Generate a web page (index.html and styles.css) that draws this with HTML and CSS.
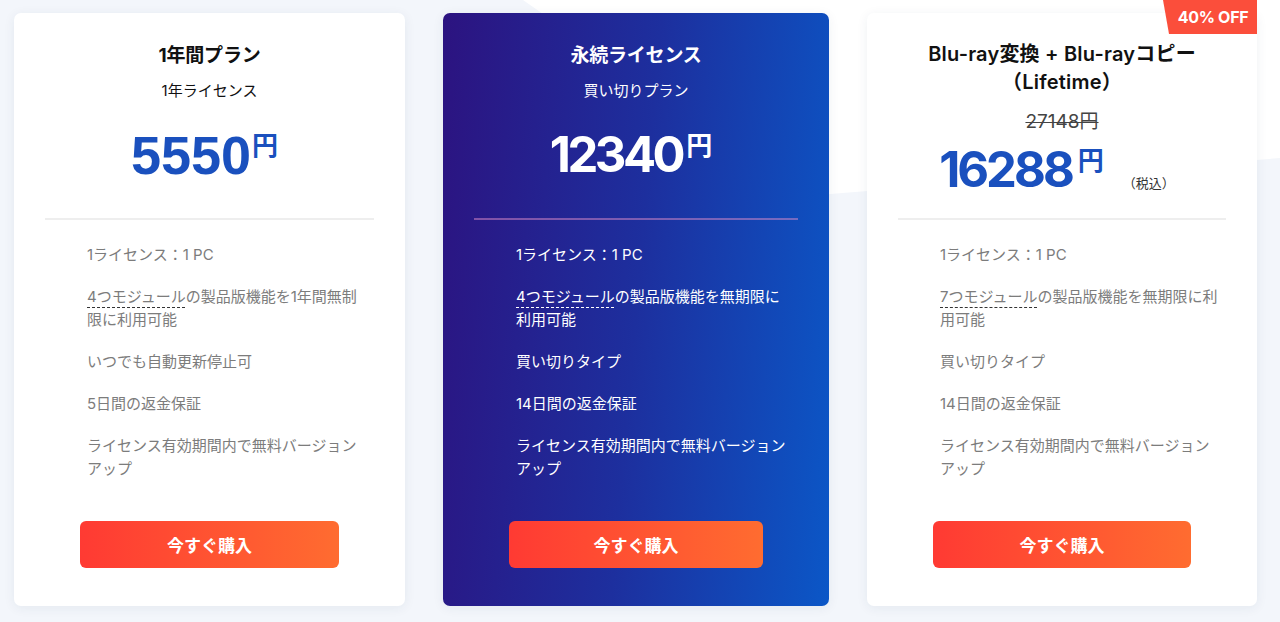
FILE: index.html
```html
<!DOCTYPE html>
<html lang="ja">
<head>
<meta charset="utf-8">
<title>プラン</title>
<link rel="stylesheet" href="styles.css">
</head>
<body>
<div class="bg-shape"></div>
<main class="plans">
  <section class="card">
    <div class="head">
      <h3 class="title">1年間プラン</h3>
      <p class="sub">1年ライセンス</p>
      <div class="price price--arial"><span class="num">5550</span><span class="yen">円</span></div>
    </div>
    <hr class="divider">
    <ul class="features">
      <li>1ライセンス：1 PC</li>
      <li><span class="dotted">4つモジュール</span>の製品版機能を1年間無制限に利用可能</li>
      <li>いつでも自動更新停止可</li>
      <li>5日間の返金保証</li>
      <li>ライセンス有効期間内で無料バージョンアップ</li>
    </ul>
    <a class="buy" href="#">今すぐ購入</a>
  </section>

  <section class="card card--dark">
    <div class="head">
      <h3 class="title">永続ライセンス</h3>
      <p class="sub">買い切りプラン</p>
      <div class="price"><span class="num">12340</span><span class="yen">円</span></div>
    </div>
    <hr class="divider">
    <ul class="features">
      <li>1ライセンス：1 PC</li>
      <li><span class="dotted">4つモジュール</span>の製品版機能を無期限に利用可能</li>
      <li>買い切りタイプ</li>
      <li>14日間の返金保証</li>
      <li>ライセンス有効期間内で無料バージョンアップ</li>
    </ul>
    <a class="buy" href="#">今すぐ購入</a>
  </section>

  <section class="card card--deal">
    <span class="badge">40% OFF</span>
    <div class="head">
      <h3 class="title title--long">Blu-ray変換 + Blu-rayコピー<br>（Lifetime）</h3>
      <p class="old">27148円</p>
      <div class="price price--deal"><span class="num">16288</span><span class="yen">円</span><span class="tax">（税込）</span></div>
    </div>
    <hr class="divider">
    <ul class="features">
      <li>1ライセンス：1 PC</li>
      <li><span class="dotted">7つモジュール</span>の製品版機能を無期限に利用可能</li>
      <li>買い切りタイプ</li>
      <li>14日間の返金保証</li>
      <li>ライセンス有効期間内で無料バージョンアップ</li>
    </ul>
    <a class="buy" href="#">今すぐ購入</a>
  </section>
</main>
</body>
</html>
```

FILE: styles.css
```css
* { box-sizing: border-box; }

html, body {
  margin: 0;
  height: 100%;
}

body {
  background: #f3f6fb;
  font-family: Inter, "Noto Sans CJK JP", sans-serif;
  color: #111;
  overflow: hidden;
  position: relative;
}

.bg-shape {
  position: absolute;
  inset: 0;
  background: #ffffff;
  clip-path: polygon(523px 0, 1280px 0, 1280px 158px, 805px 196px);
  z-index: 0;
}

.plans {
  position: relative;
  z-index: 1;
  display: grid;
  grid-template-columns: 391px 386px 390px;
  column-gap: 38px;
  padding: 13px 0 0 14px;
}

.card {
  position: relative;
  height: 593px;
  background: #fff;
  border-radius: 7px;
  box-shadow: 0 2px 12px rgba(30, 50, 90, 0.07);
  padding: 0 31px 38px;
  display: flex;
  flex-direction: column;
}

.card--dark {
  background: linear-gradient(95deg, #2c1380 0%, #1d2f9e 50%, #0b57c7 100%);
  color: #fff;
}

.head {
  height: 205px;
  display: flex;
  flex-direction: column;
  align-items: center;
  text-align: center;
}

.title {
  margin: 30px 0 0;
  font-size: 19px;
  line-height: 26px;
  font-weight: 700;
  letter-spacing: -0.2px;
}

.title--long {
  margin-top: 27px;
  font-size: 20px;
  line-height: 28px;
  font-weight: 600;
  letter-spacing: 0.2px;
}

.sub {
  margin: 10px 0 0;
  font-size: 15px;
  line-height: 24px;
}

.old {
  margin: 13px 0 0;
  font-size: 19px;
  line-height: 26px;
  color: #444;
  text-decoration: line-through;
  text-decoration-thickness: 1px;
  letter-spacing: 0;
}

.price {
  margin-top: 22px;
  height: 60px;
  padding-right: 10px;
  display: flex;
  align-items: flex-start;
  justify-content: center;
  color: #1a50be;
}

.card--dark .price { color: #fff; }

.price .num {
  font-size: 49px;
  line-height: 60px;
  font-weight: 700;
  letter-spacing: -3.5px;
}

.price--arial .num {
  font-family: "Liberation Sans", Arial, sans-serif;
  font-size: 54px;
  letter-spacing: 0;
}

.price .yen {
  margin: 8px 0 0 4px;
  font-size: 26px;
  line-height: 26px;
  font-weight: 700;
}

.price--arial .yen { margin-left: 1px; }

.price--deal {
  margin-top: 5px;
}

.price--deal .num { letter-spacing: -3px; }
.price--deal .yen { margin-left: 6px; }

.price .tax {
  align-self: flex-end;
  margin: 0 0 8px 19px;
  font-size: 13px;
  line-height: 18px;
  font-weight: 400;
  color: #333;
}

.divider {
  margin: 0;
  border: 0;
  height: 2px;
  background: #eeeeee;
}

.card--dark .divider {
  background: rgba(220, 140, 200, 0.5);
}

.features {
  list-style: none;
  margin: 0;
  padding: 23px 5px 0 42px;
  font-size: 15px;
  line-height: 23px;
  color: #7c7c7c;
}

.card--dark .features { color: #fff; }

.features li + li { margin-top: 19px; }

.dotted {
  display: inline-block;
  line-height: 23px;
  text-decoration: underline dashed #333 1px;
  text-underline-offset: 5px;
}

.card--dark .dotted {
  text-decoration-color: #fff;
}

.buy {
  margin-top: auto;
  align-self: center;
  width: 78.5%;
  height: 47px;
  border-radius: 6px;
  background: linear-gradient(90deg, #ff3a33 0%, #ff6c30 100%);
  color: #fff;
  font-size: 17px;
  font-weight: 700;
  text-decoration: none;
  display: flex;
  align-items: center;
  justify-content: center;
}

.badge {
  position: absolute;
  top: -13px;
  right: 0;
  width: 94px;
  height: 34px;
  background: #fb4e3b;
  color: #fff;
  font-size: 16px;
  font-weight: 700;
  display: flex;
  align-items: center;
  justify-content: center;
  padding-left: 6px;
  clip-path: polygon(0 0, 100% 0, 100% 100%, 6px 100%);
  letter-spacing: -0.3px;
}
```
